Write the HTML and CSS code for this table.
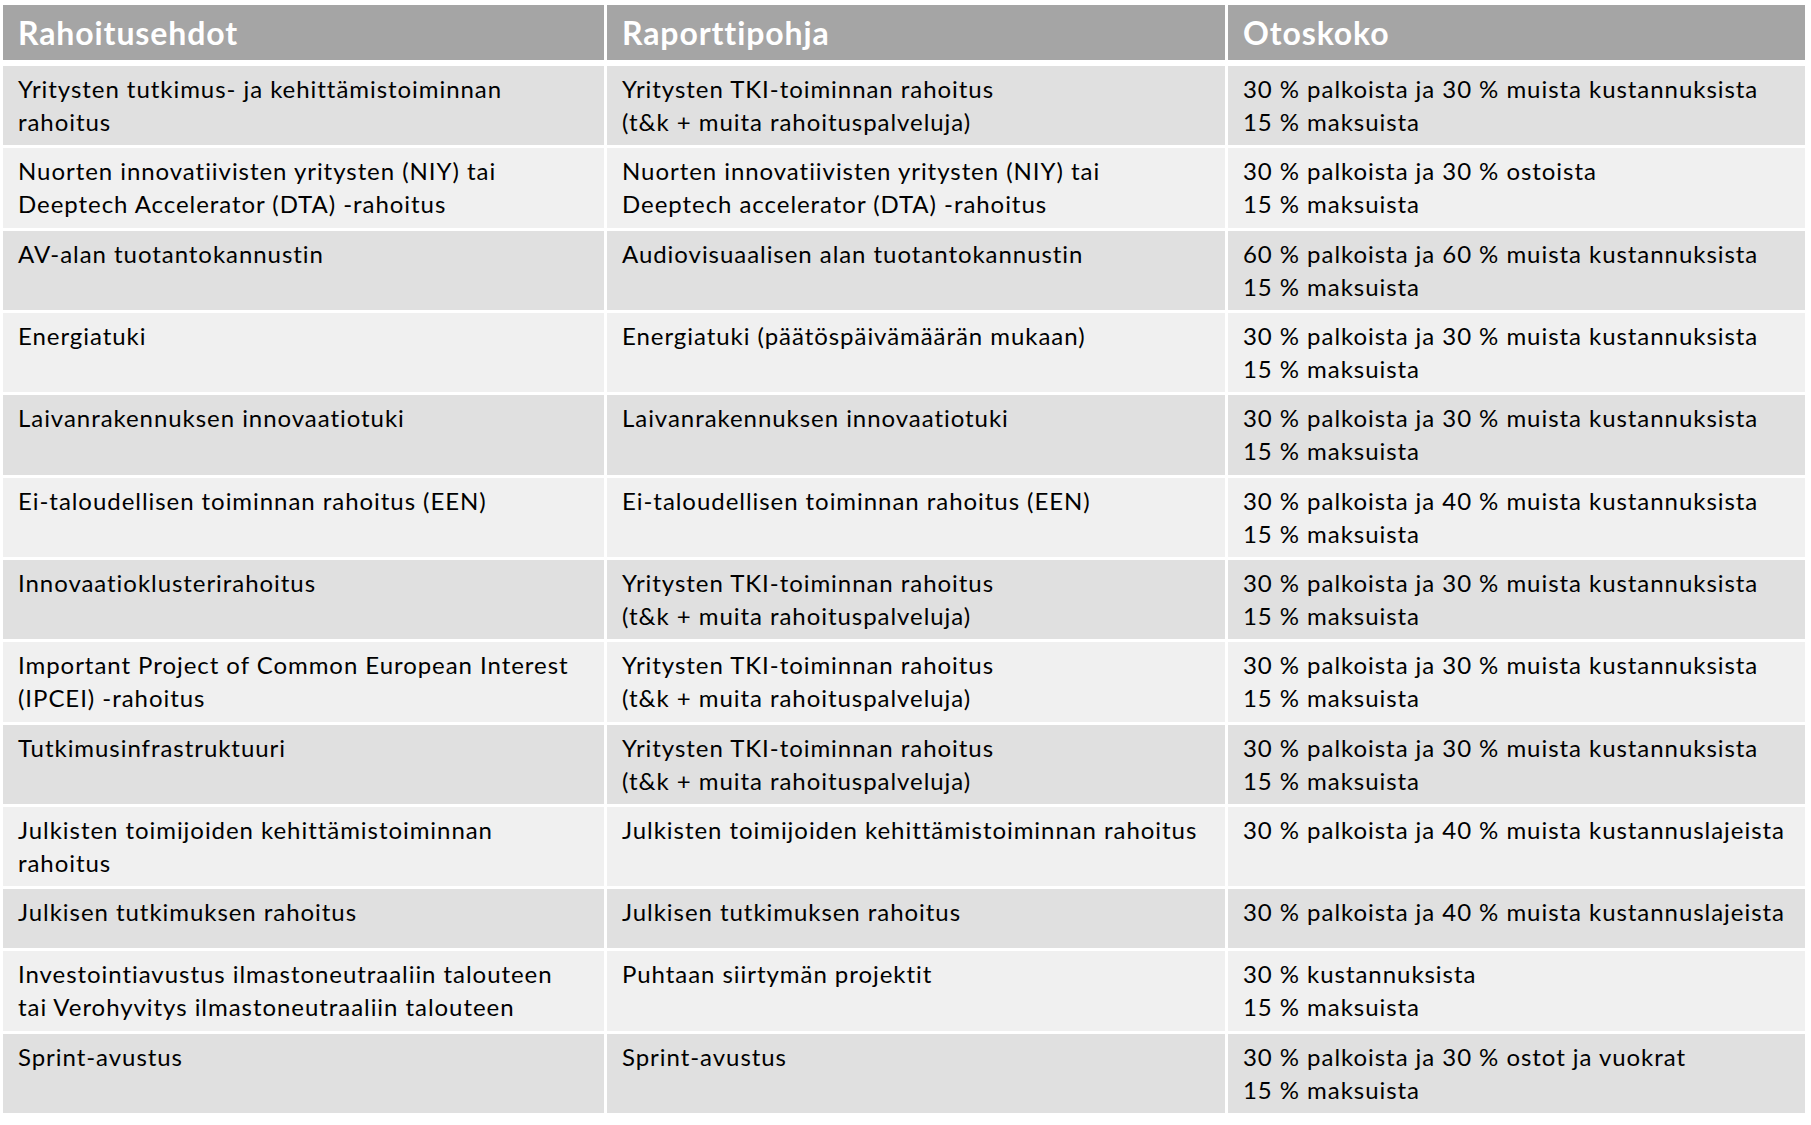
FILE: index.html
```html
<!DOCTYPE html>
<html lang="fi">
<head>
<meta charset="utf-8">
<title>Rahoitusehdot</title>
<link rel="stylesheet" href="styles.css">
</head>
<body>
<div class="table">
  <div class="row head">
    <div class="cell">Rahoitusehdot</div>
    <div class="cell">Raporttipohja</div>
    <div class="cell">Otoskoko</div>
  </div>
  <div class="row band">
    <div class="cell">Yritysten tutkimus- ja kehittämistoiminnan<br>rahoitus</div>
    <div class="cell">Yritysten TKI-toiminnan rahoitus<br>(t&amp;k + muita rahoituspalveluja)</div>
    <div class="cell">30 % palkoista ja 30 % muista kustannuksista<br>15 % maksuista</div>
  </div>
  <div class="row">
    <div class="cell">Nuorten innovatiivisten yritysten (NIY) tai<br>Deeptech Accelerator (DTA) -rahoitus</div>
    <div class="cell">Nuorten innovatiivisten yritysten (NIY) tai<br>Deeptech accelerator (DTA) -rahoitus</div>
    <div class="cell">30 % palkoista ja 30 % ostoista<br>15 % maksuista</div>
  </div>
  <div class="row band">
    <div class="cell">AV-alan tuotantokannustin</div>
    <div class="cell">Audiovisuaalisen alan tuotantokannustin</div>
    <div class="cell">60 % palkoista ja 60 % muista kustannuksista<br>15 % maksuista</div>
  </div>
  <div class="row">
    <div class="cell">Energiatuki</div>
    <div class="cell">Energiatuki (päätöspäivämäärän mukaan)</div>
    <div class="cell">30 % palkoista ja 30 % muista kustannuksista<br>15 % maksuista</div>
  </div>
  <div class="row band">
    <div class="cell">Laivanrakennuksen innovaatiotuki</div>
    <div class="cell">Laivanrakennuksen innovaatiotuki</div>
    <div class="cell">30 % palkoista ja 30 % muista kustannuksista<br>15 % maksuista</div>
  </div>
  <div class="row">
    <div class="cell">Ei-taloudellisen toiminnan rahoitus (EEN)</div>
    <div class="cell">Ei-taloudellisen toiminnan rahoitus (EEN)</div>
    <div class="cell">30 % palkoista ja 40 % muista kustannuksista<br>15 % maksuista</div>
  </div>
  <div class="row band">
    <div class="cell">Innovaatioklusterirahoitus</div>
    <div class="cell">Yritysten TKI-toiminnan rahoitus<br>(t&amp;k + muita rahoituspalveluja)</div>
    <div class="cell">30 % palkoista ja 30 % muista kustannuksista<br>15 % maksuista</div>
  </div>
  <div class="row">
    <div class="cell">Important Project of Common European Interest<br>(IPCEI) -rahoitus</div>
    <div class="cell">Yritysten TKI-toiminnan rahoitus<br>(t&amp;k + muita rahoituspalveluja)</div>
    <div class="cell">30 % palkoista ja 30 % muista kustannuksista<br>15 % maksuista</div>
  </div>
  <div class="row band">
    <div class="cell">Tutkimusinfrastruktuuri</div>
    <div class="cell">Yritysten TKI-toiminnan rahoitus<br>(t&amp;k + muita rahoituspalveluja)</div>
    <div class="cell">30 % palkoista ja 30 % muista kustannuksista<br>15 % maksuista</div>
  </div>
  <div class="row">
    <div class="cell">Julkisten toimijoiden kehittämistoiminnan<br>rahoitus</div>
    <div class="cell">Julkisten toimijoiden kehittämistoiminnan rahoitus</div>
    <div class="cell">30 % palkoista ja 40 % muista kustannuslajeista</div>
  </div>
  <div class="row band short">
    <div class="cell">Julkisen tutkimuksen rahoitus</div>
    <div class="cell">Julkisen tutkimuksen rahoitus</div>
    <div class="cell">30 % palkoista ja 40 % muista kustannuslajeista</div>
  </div>
  <div class="row">
    <div class="cell">Investointiavustus ilmastoneutraaliin talouteen<br>tai Verohyvitys ilmastoneutraaliin talouteen</div>
    <div class="cell">Puhtaan siirtymän projektit</div>
    <div class="cell">30 % kustannuksista<br>15 % maksuista</div>
  </div>
  <div class="row band">
    <div class="cell">Sprint-avustus</div>
    <div class="cell">Sprint-avustus</div>
    <div class="cell">30 % palkoista ja 30 % ostot ja vuokrat<br>15 % maksuista</div>
  </div>
</div>
</body>
</html>
```
FILE: styles.css
```css
html, body {
  margin: 0;
  padding: 0;
  background: #ffffff;
}

body {
  font-family: "Lato", "Liberation Sans", sans-serif;
  color: #000000;
}

.table {
  display: flex;
  flex-direction: column;
  gap: 3px;
  margin: 5px 0 0 3px;
  width: 1802px;
}

.row {
  display: grid;
  grid-template-columns: 601px 618px 577px;
  column-gap: 3px;
  height: 79.33px;
}

.row.short {
  height: 59px;
}

.cell {
  box-sizing: border-box;
  padding: 6px 0 0 15px;
  background: #f0f0f0;
  font-size: 24px;
  line-height: 33px;
  letter-spacing: 0.95px;
  white-space: nowrap;
  overflow: hidden;
}

.row.band .cell {
  background: #e0e0e0;
}

.row.head {
  height: 55px;
  margin-bottom: 3px;
}

.row.head .cell {
  background: #a5a5a5;
  color: #ffffff;
  font-weight: 700;
  font-size: 32px;
  line-height: 55px;
  letter-spacing: 0.9px;
  padding-top: 0;
}
```
